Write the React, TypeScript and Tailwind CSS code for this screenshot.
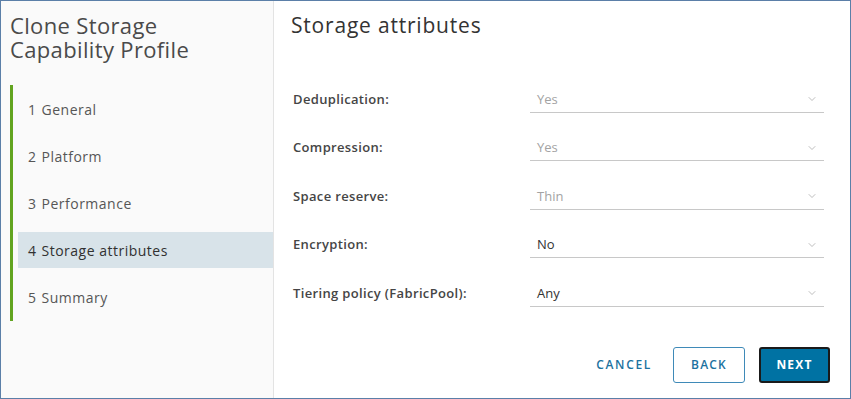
import { ChevronDown } from 'lucide-react';

const steps = ['General', 'Platform', 'Performance', 'Storage attributes', 'Summary'];

const fields = [
  { label: 'Deduplication:', value: 'Yes', disabled: true },
  { label: 'Compression:', value: 'Yes', disabled: true },
  { label: 'Space reserve:', value: 'Thin', disabled: true },
  { label: 'Encryption:', value: 'No', disabled: false },
  { label: 'Tiering policy (FabricPool):', value: 'Any', disabled: false },
];

const App = () => {
  return (
    <div
      className="w-[851px] h-[399px] flex border border-[#5b7fa8] bg-white overflow-hidden"
      style={{ fontFamily: '"Open Sans", "Noto Sans", sans-serif' }}
    >
      <div className="w-[273px] shrink-0 bg-[#fafafa] border-r border-[#e3e3e3] pl-[9px] pt-[12px]">
        <h1 className="text-[22px] leading-[24px] tracking-[0.35px] text-[#4a4a4a] font-normal">
          Clone Storage
          <br />
          Capability Profile
        </h1>

        <div className="mt-[24px] border-l-[3px] border-[#62a420] py-[6px] flex flex-col gap-[11px]">
          {steps.map((step, i) => {
            const active = i === 3;
            return (
              <div
                key={step}
                className={`ml-[5px] h-9 flex items-center pl-[10px] text-[14px] tracking-[0.5px] ${
                  active ? 'bg-[#d8e3e9] text-[#313131]' : 'text-[#565656]'
                }`}
              >
                <span className="mr-[5px]">{i + 1}</span>
                {step}
              </div>
            );
          })}
        </div>
      </div>

      <div className="flex-1 flex flex-col pl-[17px] pr-[26px] pt-[12px] pb-[15px]">
        <h2 className="text-[21px] leading-[24px] tracking-[0.8px] text-[#333] font-normal">Storage attributes</h2>

        <div className="mt-[38px] flex flex-col pl-[2px]">
          {fields.map((f) => (
            <div key={f.label} className="h-[48.5px] flex items-center">
              <div className="w-[237px] text-[13px] font-semibold tracking-[0.35px] text-[#454545]">{f.label}</div>
              <div className="flex-1 h-[26px] mt-[1px] flex items-center justify-between border-b border-[#c8c8c8] pl-[7px] pr-[6px]">
                <span className={`text-[13px] ${f.disabled ? 'text-[#a3a3a3]' : 'text-[#333]'}`}>{f.value}</span>
                <ChevronDown size={12} strokeWidth={1.3} className="text-[#9a9a9a]" />
              </div>
            </div>
          ))}
        </div>

        <div className="mt-auto -mr-[6px] flex justify-end items-center gap-[9px]">
          <button
            type="button"
            className="h-9 px-3 text-[12px] font-semibold tracking-[0.14em] text-[#1b72a0]"
          >
            CANCEL
          </button>
          <button
            type="button"
            className="h-9 w-[72px] rounded-[3px] border border-[#3f8ab8] text-[12px] font-semibold tracking-[0.1em] text-[#1b72a0]"
          >
            BACK
          </button>
          <button
            type="button"
            className="h-9 w-[71px] ml-[5px] rounded-[3px] border-2 border-[#1a1a1a] bg-[#0072a3] text-[12px] font-bold tracking-[0.1em] text-white"
          >
            NEXT
          </button>
        </div>
      </div>
    </div>
  );
};

export default App;
